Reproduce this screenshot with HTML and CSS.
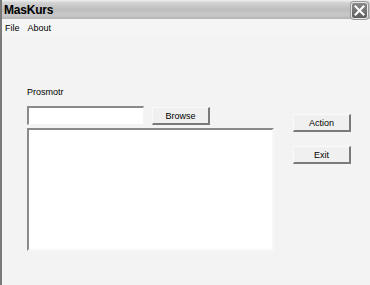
FILE: index.html
```html
<!DOCTYPE html>
<html lang="en">
<head>
  <meta charset="UTF-8" />
  <title>MasKurs</title>
  <link rel="stylesheet" href="styles.css">
</head>
<body>
  <div class="window">
    <div class="titlebar">
      <span class="title">MasKurs</span>
      <button class="close" aria-label="Close">
        <svg width="11" height="11" viewBox="0 0 11 11">
          <path d="M1.5 1.5 L9.5 9.5 M9.5 1.5 L1.5 9.5" stroke="#fff" stroke-width="2" stroke-linecap="square" />
        </svg>
      </button>
    </div>

    <div class="menubar">
      <span class="menu-item">File</span>
      <span class="menu-item">About</span>
    </div>

    <div class="client">
      <div class="left">
        <div class="label">Prosmotr</div>
        <div class="file-row">
          <input type="text" class="field" />
          <button class="btn browse">Browse</button>
        </div>
        <textarea class="viewer"></textarea>
      </div>
      <div class="right">
        <button class="btn">Action</button>
        <button class="btn">Exit</button>
      </div>
    </div>
  </div>
</body>
</html>
```

FILE: styles.css
```css
* {
  box-sizing: border-box;
}

body {
  margin: 0;
  font-family: "Liberation Sans", Arial, sans-serif;
  font-size: 9px;
  color: #000;
  background: #f3f3f3;
}

.window {
  width: 370px;
  height: 285px;
  background: #f3f3f3;
  border-left: 2px solid #7a7a7a;
  overflow: hidden;
}

.titlebar {
  height: 19px;
  margin-left: -2px;
  display: flex;
  align-items: center;
  justify-content: space-between;
  padding: 0 2px 0 4px;
  background: linear-gradient(#f0f0f0 0, #d2d2d2 15%, #bebebe 50%, #c8c8c8 80%, #b4b4b4 100%);
}

.title {
  font-weight: bold;
  font-size: 12px;
  letter-spacing: -0.2px;
}

.close {
  width: 17px;
  height: 17px;
  padding: 0;
  margin-top: 1px;
  display: flex;
  align-items: center;
  justify-content: center;
  background: linear-gradient(#8a8a8a, #5e5e5e);
  border: 1px solid #e6e6e6;
  border-radius: 3px;
  box-shadow: 0 0 0 1px #9a9a9a;
}

.menubar {
  height: 17px;
  display: flex;
  align-items: center;
  gap: 8px;
  padding-left: 3px;
  background: #f5f5f5;
}

.client {
  display: flex;
  padding: 50px 0 0 25px;
}

.left {
  width: 247px;
}

.label {
  line-height: 12px;
  height: 12px;
  margin-bottom: 8px;
}

.file-row {
  display: flex;
  gap: 8px;
}

.field {
  width: 117px;
  height: 19px;
  margin: 0;
  padding: 0 2px;
  background: #fff;
  border: 1px solid;
  border-color: #8a8a8a #f4f4f4 #f4f4f4 #8a8a8a;
  border-top-width: 2px;
  border-left-width: 2px;
  font: inherit;
}

.btn {
  width: 58px;
  height: 18px;
  padding: 0;
  margin: 0;
  font: inherit;
  color: #000;
  background: #f0f0f0;
  border: 1px solid;
  border-color: #fafafa #7a7a7a #7a7a7a #fafafa;
  border-right-width: 2px;
  border-bottom-width: 2px;
}

.browse {
  margin-top: 1px;
}

.viewer {
  display: block;
  width: 247px;
  height: 123px;
  margin: 3px 0 0;
  background: #fff;
  border: 2px solid;
  border-color: #8a8a8a #f7f7f7 #f7f7f7 #8a8a8a;
  resize: none;
}

.right {
  display: flex;
  flex-direction: column;
  gap: 14px;
  padding: 28px 0 0 19px;
}
```
